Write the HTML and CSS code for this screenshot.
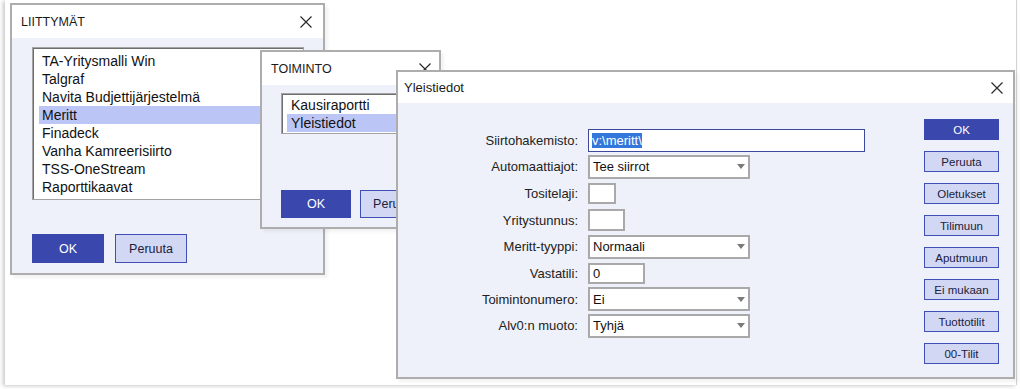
FILE: index.html
```html
<!DOCTYPE html>
<html lang="fi">
<head>
<meta charset="utf-8">
<title>Liittymät</title>
<link rel="stylesheet" href="styles.css">
</head>
<body>
<div class="screen">

  <section class="win win-liit">
    <header class="win-title">
      <span>LIITTYMÄT</span>
      <svg class="close" width="12" height="12" viewBox="0 0 12 12"><path d="M0.5 0.5L11.5 11.5M11.5 0.5L0.5 11.5"/></svg>
    </header>
    <div class="liit-body">
      <ul class="listbox liit-list">
        <li>TA-Yritysmalli Win</li>
        <li>Talgraf</li>
        <li>Navita Budjettijärjestelmä</li>
        <li class="sel">Meritt</li>
        <li>Finadeck</li>
        <li>Vanha Kamreerisiirto</li>
        <li>TSS-OneStream</li>
        <li>Raporttikaavat</li>
      </ul>
      <div class="btn-row liit-btns">
        <button class="btn btn-primary">OK</button>
        <button class="btn">Peruuta</button>
      </div>
    </div>
  </section>

  <section class="win win-toim">
    <header class="win-title">
      <span>TOIMINTO</span>
      <svg class="close" width="12" height="12" viewBox="0 0 12 12"><path d="M0.5 0.5L11.5 11.5M11.5 0.5L0.5 11.5"/></svg>
    </header>
    <div class="toim-body">
      <ul class="listbox toim-list">
        <li>Kausiraportti</li>
        <li class="sel">Yleistiedot</li>
      </ul>
      <div class="btn-row toim-btns">
        <button class="btn btn-primary">OK</button>
        <button class="btn">Peruuta</button>
      </div>
    </div>
  </section>

  <section class="win win-yleis">
    <header class="win-title">
      <span>Yleistiedot</span>
      <svg class="close" width="12" height="12" viewBox="0 0 12 12"><path d="M0.5 0.5L11.5 11.5M11.5 0.5L0.5 11.5"/></svg>
    </header>
    <div class="yleis-body">
      <div class="form">
        <span class="lbl">Siirtohakemisto:</span>
        <div class="box path"><span class="selected">v:\meritt\</span></div>

        <span class="lbl">Automaattiajot:</span>
        <div class="box select"><span>Tee siirrot</span><i class="arrow"></i></div>

        <span class="lbl">Tositelaji:</span>
        <div class="box w-tosite"></div>

        <span class="lbl">Yritystunnus:</span>
        <div class="box w-yritys"></div>

        <span class="lbl">Meritt-tyyppi:</span>
        <div class="box select"><span>Normaali</span><i class="arrow"></i></div>

        <span class="lbl">Vastatili:</span>
        <div class="box w-vasta"><span>0</span></div>

        <span class="lbl">Toimintonumero:</span>
        <div class="box select"><span>Ei</span><i class="arrow"></i></div>

        <span class="lbl">Alv0:n muoto:</span>
        <div class="box select"><span>Tyhjä</span><i class="arrow"></i></div>
      </div>
      <div class="side-btns">
        <button class="btn sbtn btn-primary">OK</button>
        <button class="btn sbtn">Peruuta</button>
        <button class="btn sbtn">Oletukset</button>
        <button class="btn sbtn">Tilimuun</button>
        <button class="btn sbtn">Aputmuun</button>
        <button class="btn sbtn">Ei mukaan</button>
        <button class="btn sbtn">Tuottotilit</button>
        <button class="btn sbtn">00-Tilit</button>
      </div>
    </div>
  </section>

</div>
</body>
</html>
```

FILE: styles.css
```css
* { box-sizing: border-box; }

body {
  margin: 0;
  width: 1020px;
  height: 389px;
  overflow: hidden;
  background: #ffffff;
  font-family: "Liberation Sans", Arial, sans-serif;
  color: #1a1a1a;
}

.screen {
  position: relative;
  margin-left: 5px;
  width: 1012px;
  height: 385px;
  background: #ffffff;
  border-right: 1px solid #d4d4d4;
  box-shadow: -2px 1px 4px rgba(0, 0, 0, 0.22);
}

.win {
  position: absolute;
  display: flex;
  flex-direction: column;
  background: #eef1f9;
  border: 2px solid #adadad;
  box-shadow: 3px 3px 3px rgba(0, 0, 0, 0.05);
}

.win-title {
  flex: none;
  display: flex;
  align-items: center;
  justify-content: space-between;
  background: #ffffff;
  color: #1a1a1a;
}

.close path {
  stroke: #2a2a2a;
  stroke-width: 1.2;
  fill: none;
}

.win-liit { left: 5px; top: 3px; width: 315px; height: 272px; }
.win-liit .win-title { height: 33px; padding: 0 11px 0 9px; font-size: 12.5px; }

.win-toim { left: 255px; top: 50px; width: 181px; height: 179px; }
.win-toim .win-title { height: 33px; padding: 0 8px 0 9px; font-size: 12.5px; }

.win-yleis { left: 391px; top: 70px; width: 619px; height: 309px; }
.win-yleis .win-title { height: 31px; padding: 0 10px 0 6px; font-size: 13px; }

/* list boxes */
.listbox {
  list-style: none;
  margin: 0;
  background: #ffffff;
  border: 1px solid #a3a3a3;
  box-shadow: inset 1px 1px 0 #6e6e6e;
  font-size: 14px;
  line-height: 18px;
  color: #111;
  overflow: hidden;
}
.listbox li { height: 18px; white-space: nowrap; }
.listbox .sel { background: #bcc6f6; }

.liit-body { padding: 9px 0 0 20px; }
.liit-list { width: 272px; height: 153px; padding: 4px 5px 2px 6px; }
.liit-list li { padding-left: 3px; }

.toim-body { padding: 8px 0 0 19px; }
.toim-list { width: 160px; height: 41px; padding: 2px 4px 0 5px; }
.toim-list li { padding-left: 4px; }

/* buttons */
.btn-row { display: flex; }
.btn {
  padding: 0;
  font-family: inherit;
  background: #d2d8f4;
  border: 1px solid #3f4fb5;
  color: #20203a;
}
.btn-primary {
  background: #3a48ae;
  border-color: #3a48ae;
  color: #ffffff;
}

.liit-btns { margin-top: 34px; gap: 11px; }
.liit-btns .btn { width: 72px; height: 29px; font-size: 12.5px; }

.toim-btns { margin-top: 56px; gap: 9px; }
.toim-btns .btn { width: 70px; height: 28px; font-size: 12.5px; }

/* Yleistiedot body */
.yleis-body { display: flex; flex: 1; }

.form {
  display: grid;
  grid-template-columns: 118px 277px;
  grid-template-rows: 26px 27px 27px 26px 27px 26px 26px 27px;
  column-gap: 10px;
  padding: 24px 0 0 62px;
  align-content: start;
}

.lbl {
  align-self: center;
  text-align: right;
  font-size: 13px;
  color: #222;
  white-space: nowrap;
}

.box {
  align-self: center;
  justify-self: start;
  display: flex;
  align-items: center;
  background: #ffffff;
  border: 2px solid #a9a9a9;
  padding-left: 3px;
  font-size: 13px;
  color: #111;
}

.path {
  width: 277px;
  height: 23px;
  border: 1px solid #3d4a9c;
}
.selected {
  background: #3377dd;
  color: #ffffff;
  line-height: 15px;
}

.select {
  width: 162px;
  height: 24px;
  justify-content: space-between;
  padding-right: 3px;
}
.arrow {
  width: 0;
  height: 0;
  border-top: 5px solid #7a7a7a;
  border-left: 4.5px solid transparent;
  border-right: 4.5px solid transparent;
}

.w-tosite { width: 28px; height: 21px; }
.w-yritys { width: 37px; height: 22px; }
.w-vasta { width: 57px; height: 21px; }

.side-btns {
  margin-left: auto;
  display: flex;
  flex-direction: column;
  gap: 11px;
  padding: 16px 14px 0 0;
}
.sbtn { width: 75px; height: 21px; font-size: 11.5px; }
```
